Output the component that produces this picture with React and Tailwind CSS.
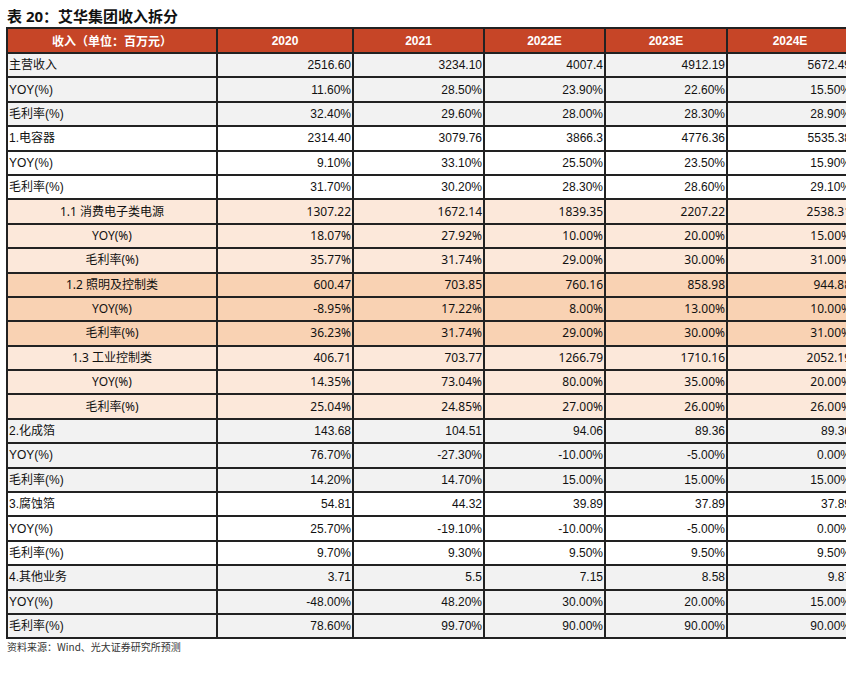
const rows = [
  ["主营收入", ["2516.60", "3234.10", "4007.4", "4912.19", "5672.49"], "gray", false],
  ["YOY(%)", ["11.60%", "28.50%", "23.90%", "22.60%", "15.50%"], "gray", false],
  ["毛利率(%)", ["32.40%", "29.60%", "28.00%", "28.30%", "28.90%"], "gray", false],
  ["1.电容器", ["2314.40", "3079.76", "3866.3", "4776.36", "5535.38"], "white", false],
  ["YOY(%)", ["9.10%", "33.10%", "25.50%", "23.50%", "15.90%"], "white", false],
  ["毛利率(%)", ["31.70%", "30.20%", "28.30%", "28.60%", "29.10%"], "white", false],
  ["1.1 消费电子类电源", ["1307.22", "1672.14", "1839.35", "2207.22", "2538.31"], "light", true],
  ["YOY(%)", ["18.07%", "27.92%", "10.00%", "20.00%", "15.00%"], "light", true],
  ["毛利率(%)", ["35.77%", "31.74%", "29.00%", "30.00%", "31.00%"], "light", true],
  ["1.2 照明及控制类", ["600.47", "703.85", "760.16", "858.98", "944.88"], "peach", true],
  ["YOY(%)", ["-8.95%", "17.22%", "8.00%", "13.00%", "10.00%"], "peach", true],
  ["毛利率(%)", ["36.23%", "31.74%", "29.00%", "30.00%", "31.00%"], "peach", true],
  ["1.3 工业控制类", ["406.71", "703.77", "1266.79", "1710.16", "2052.19"], "light", true],
  ["YOY(%)", ["14.35%", "73.04%", "80.00%", "35.00%", "20.00%"], "light", true],
  ["毛利率(%)", ["25.04%", "24.85%", "27.00%", "26.00%", "26.00%"], "light", true],
  ["2.化成箔", ["143.68", "104.51", "94.06", "89.36", "89.36"], "gray", false],
  ["YOY(%)", ["76.70%", "-27.30%", "-10.00%", "-5.00%", "0.00%"], "gray", false],
  ["毛利率(%)", ["14.20%", "14.70%", "15.00%", "15.00%", "15.00%"], "gray", false],
  ["3.腐蚀箔", ["54.81", "44.32", "39.89", "37.89", "37.89"], "white", false],
  ["YOY(%)", ["25.70%", "-19.10%", "-10.00%", "-5.00%", "0.00%"], "white", false],
  ["毛利率(%)", ["9.70%", "9.30%", "9.50%", "9.50%", "9.50%"], "white", false],
  ["4.其他业务", ["3.71", "5.5", "7.15", "8.58", "9.87"], "gray", false],
  ["YOY(%)", ["-48.00%", "48.20%", "30.00%", "20.00%", "15.00%"], "gray", false],
  ["毛利率(%)", ["78.60%", "99.70%", "90.00%", "90.00%", "90.00%"], "gray", false],
];

const bg = {
  gray: "bg-[#f2f2f2]",
  white: "bg-white",
  light: "bg-[#fce8da]",
  peach: "bg-[#f9d2b3]",
};

const years = ["2020", "2021", "2022E", "2023E", "2024E"];

export default function App() {
  return (
    <div className="w-[846px] h-[674px] overflow-hidden bg-white text-[#111]">
      <div className="pl-[7px] pt-[6px] h-[27px] text-[15px] leading-[20px] font-bold font-['Noto_Sans','Noto_Sans_CJK_SC',sans-serif]">
        表 20：艾华集团收入拆分
      </div>
      <table className="table-fixed border-collapse ml-[6px] w-[846px] text-[12px] leading-none">
        <colgroup>
          <col className="w-[210px]" />
          <col className="w-[136px]" />
          <col className="w-[131px]" />
          <col className="w-[121px]" />
          <col className="w-[122px]" />
          <col className="w-[126px]" />
        </colgroup>
        <thead>
          <tr className="h-[25px] bg-[#c64527] text-white font-bold">
            <th className="border-2 border-[#222] text-center font-['Noto_Sans_CJK_SC',sans-serif] text-[12px]">
              收入（单位：百万元）
            </th>
            {years.map((y) => (
              <th key={y} className="border-2 border-[#222] text-center font-['Liberation_Sans',sans-serif] text-[12px]">
                {y}
              </th>
            ))}
          </tr>
        </thead>
        <tbody>
          {rows.map(([label, vals, tone, sub], i) => (
            <tr key={i} className={`h-[24.4px] ${bg[tone]}`}>
              <td
                className={`border-2 border-[#222] px-[1px] whitespace-nowrap ${
                  sub
                    ? "text-center font-['Noto_Sans','Noto_Sans_CJK_SC',sans-serif]"
                    : "text-left font-['Liberation_Sans','Noto_Sans_CJK_SC',sans-serif]"
                }`}
              >
                {label}
              </td>
              {vals.map((v, j) => (
                <td
                  key={j}
                  className={`border-2 border-[#222] px-[1px] text-right whitespace-nowrap ${
                    sub ? "font-['Noto_Sans',sans-serif]" : "font-['Liberation_Sans',sans-serif]"
                  }`}
                >
                  {v}
                </td>
              ))}
            </tr>
          ))}
        </tbody>
      </table>
      <div className="pl-[7px] pt-[1px] text-[10px] leading-[14px] text-[#333] font-['Noto_Sans_CJK_SC',sans-serif]">
        资料来源：Wind、光大证券研究所预测
      </div>
    </div>
  );
}
